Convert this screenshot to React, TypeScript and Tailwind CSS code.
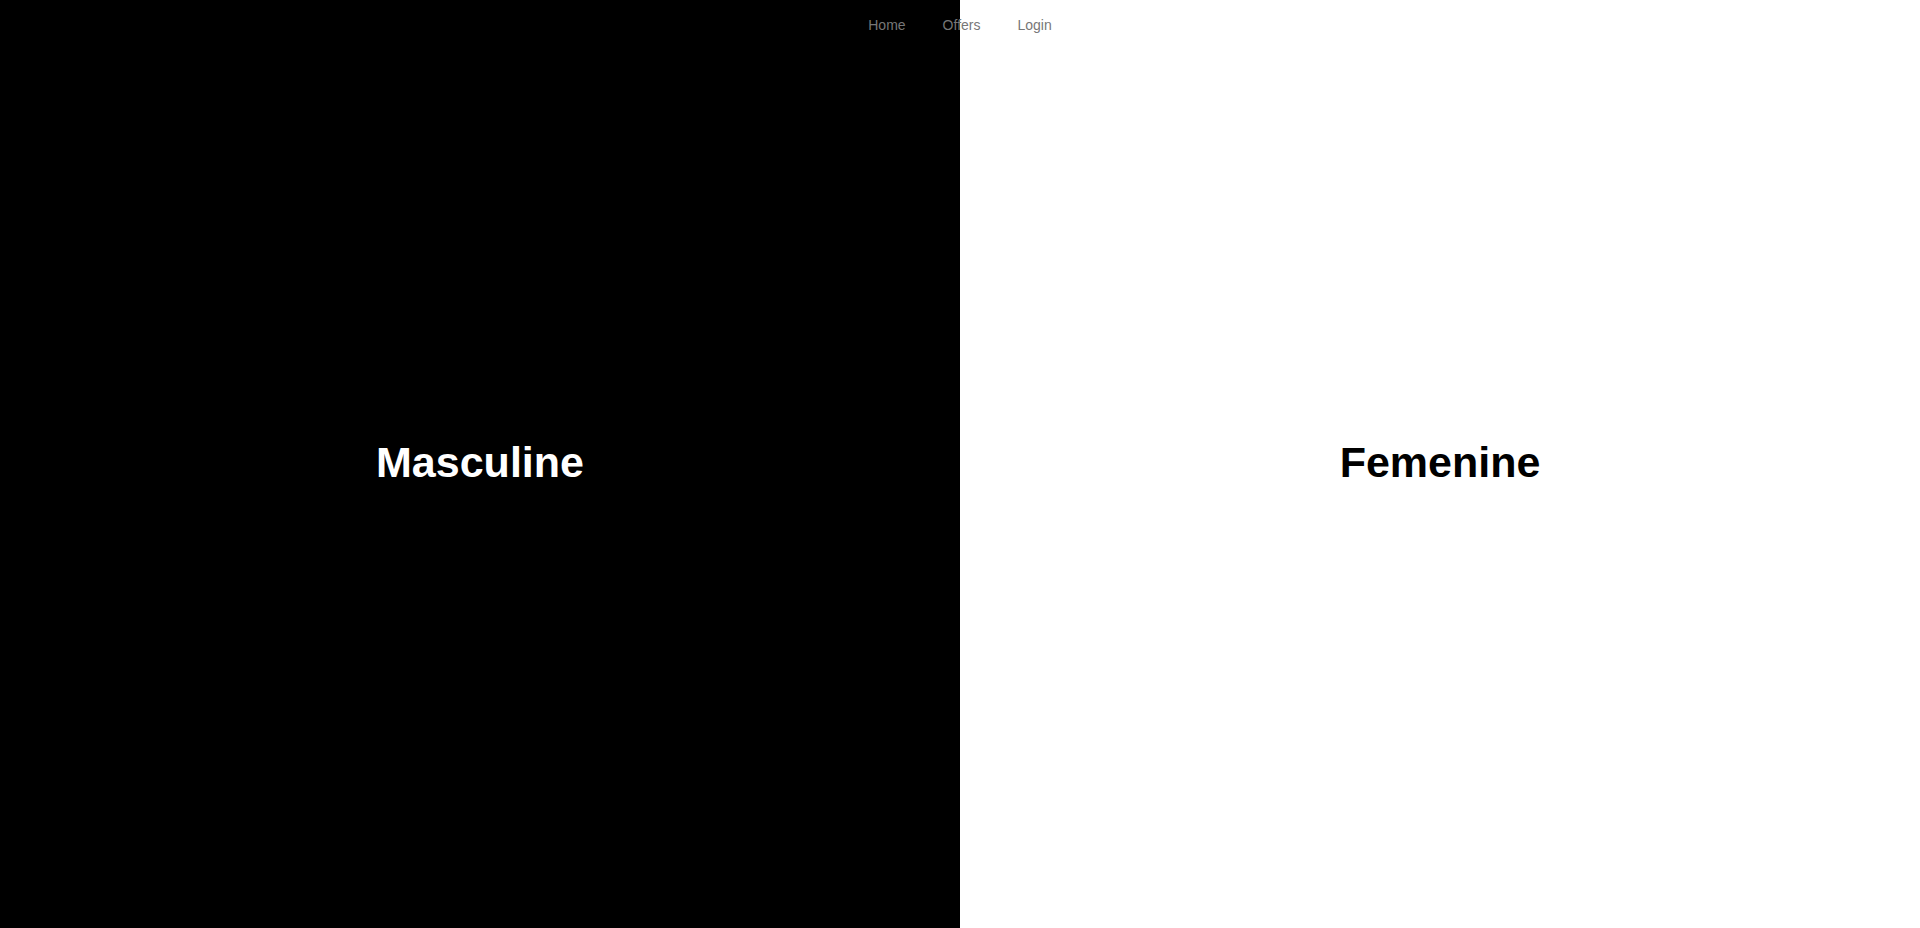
import React from "react";

const links = ["Home", "Offers", "Login"];

export default function App() {
  return (
    <div className="relative h-screen w-full font-['Liberation_Sans',Arial,sans-serif]">
      {/* nav sits over both halves */}
      <nav className="absolute top-0 left-0 right-0 z-10 flex h-[50px] items-center justify-center gap-[37px]">
        {links.map((l) => (
          <a key={l} href="#" className="text-[14px] text-[#777777]">
            {l}
          </a>
        ))}
      </nav>

      <div className="grid h-full grid-cols-2">
        <div className="flex items-center justify-center bg-black">
          <h1 className="mb-[3px] text-[43px] font-bold text-white">Masculine</h1>
        </div>
        <div className="flex items-center justify-center bg-white">
          <h1 className="mb-[3px] text-[43px] font-bold text-black">Femenine</h1>
        </div>
      </div>
    </div>
  );
}
